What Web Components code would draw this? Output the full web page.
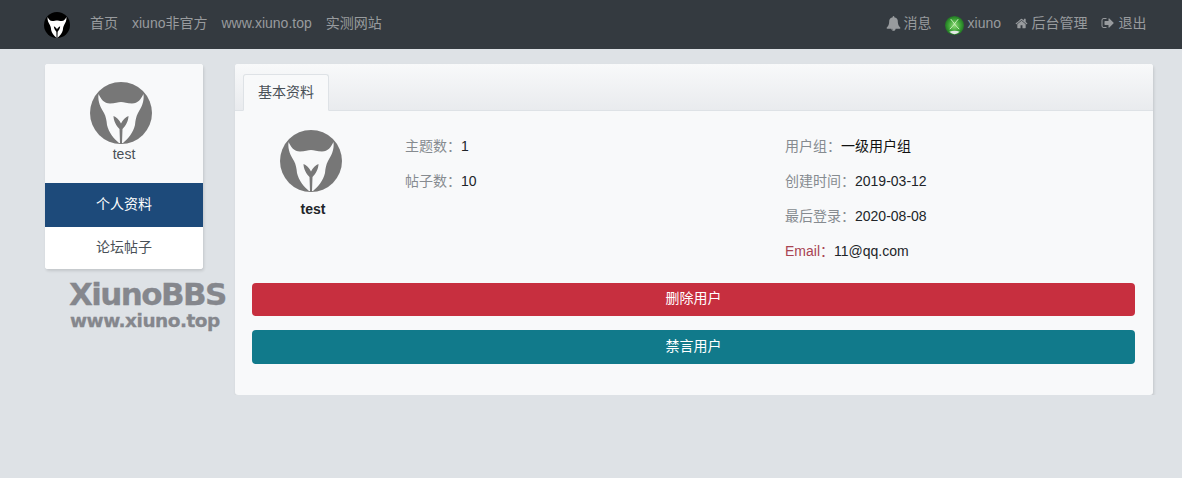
<!DOCTYPE html>
<html lang="zh">
<head>
<meta charset="utf-8">
<title>test</title>
<style>
  html, body { margin: 0; padding: 0; }
  body {
    background: #dee2e6;
    color: #212529;
    font: 14px/21px "Liberation Sans", "Noto Sans CJK SC", sans-serif;
  }
</style>
</head>
<body>

<site-navbar>
  <nav-link slot="left">首页</nav-link>
  <nav-link slot="left">xiuno非官方</nav-link>
  <nav-link slot="left">www.xiuno.top</nav-link>
  <nav-link slot="left">实测网站</nav-link>

  <nav-link slot="right" icon="bell">消息</nav-link>
  <nav-link slot="right" icon="user">xiuno</nav-link>
  <nav-link slot="right" icon="home">后台管理</nav-link>
  <nav-link slot="right" icon="signout">退出</nav-link>
</site-navbar>

<page-layout>
  <side-menu slot="side" name="test">
    <menu-item active>个人资料</menu-item>
    <menu-item>论坛帖子</menu-item>
  </side-menu>

  <profile-panel slot="main" tab="基本资料" name="test">
    <info-row slot="col1" label="主题数">1</info-row>
    <info-row slot="col1" label="帖子数">10</info-row>

    <info-row slot="col2" label="用户组" strong>一级用户组</info-row>
    <info-row slot="col2" label="创建时间">2019-03-12</info-row>
    <info-row slot="col2" label="最后登录">2020-08-08</info-row>
    <info-row slot="col2" label="Email" danger>11@qq.com</info-row>

    <action-button slot="actions" color="#c72f3f" height="33">删除用户</action-button>
    <action-button slot="actions" color="#117a8b" height="34">禁言用户</action-button>
  </profile-panel>
</page-layout>

<script>
// bull head mark, 62x62 box
function bullMark(bg, fg) {
  return `<svg viewBox="0 0 62 62" width="100%" height="100%" style="display:block">
    <circle cx="31" cy="31" r="31" fill="${bg}"/>
    <path fill="${fg}" d="M8.500 12C11 17 14 21.500 20 21.500C25 21.500 28 20 31 20C34 20 37 21.500 42 21.500C48 21.500 51 17 53.500 12C54.500 20 51 26 48 31C46 35 45.500 38 45 43C43.500 50 38 57 33 61L29 61C24 57 18.500 50 17 43C16.500 38 16 35 14 31C11 26 7.500 20 8.500 12Z"/>
    <path fill="${bg}" d="M23.500 34C26 35 29.500 38 31 41.500C32.500 38 36 35 38.500 34C38.500 39 35.500 44 32.500 47L32 61L30 61L29.500 47C26.500 44 23.500 39 23.500 34Z"/>
  </svg>`;
}

const ICONS = {
  bell: `<svg viewBox="0 0 1792 1792" width="15" height="15"><path fill="currentColor" d="M912 1696q0-16-16-16-59 0-101.500-42.500t-42.500-101.500q0-16-16-16t-16 16q0 73 51.500 124.500t124.500 51.500q16 0 16-16zm816-288q0 52-38 90t-90 38h-448q0 106-75 181t-181 75-181-75-75-181h-448q-52 0-90-38t-38-90q50-42 91-88t85-119.500 74.500-158.500 50-206 19.500-260q0-152 117-282.500t307-158.500q-8-19-8-39 0-40 28-68t68-28 68 28 28 68q0 20-8 39 190 28 307 158.500t117 282.500q0 139 19.500 260t50 206 74.500 158.500 85 119.500 91 88z"/></svg>`,
  home: `<svg viewBox="0 0 1792 1792" width="13" height="13"><path fill="currentColor" d="M1472 992v480q0 26-19 45t-45 19h-384v-384h-256v384h-384q-26 0-45-19t-19-45v-480q0-1 .5-3t.5-3l575-474 575 474q1 2 1 6zm223-69l-62 74q-8 9-21 11h-3q-13 0-21-7l-692-577-692 577q-12 8-24 7-13-2-21-11l-62-74q-8-10-7-23.500t11-21.500l719-599q32-26 76-26t76 26l244 204v-195q0-14 9-23t23-9h192q14 0 23 9t9 23v408l219 182q10 8 11 21.500t-7 23.500z"/></svg>`,
  signout: `<svg viewBox="0 0 1792 1792" width="14" height="14"><path fill="currentColor" d="M704 1440q0 4 1 20t.5 26.500-3 23.500-10 19.500-20.500 6.500h-320q-119 0-203.500-84.500t-84.500-203.500v-704q0-119 84.500-203.500t203.500-84.500h320q13 0 22.500 9.500t9.500 22.500q0 4 1 20t.5 26.500-3 23.500-10 19.500-20.500 6.500h-320q-66 0-113 47t-47 113v704q0 66 47 113t113 47h312l11.500 1 11.500 3 8 5.500 7 9 2 13.500zm928-544q0 26-19 45l-544 544q-19 19-45 19t-45-19-19-45v-288h-448q-26 0-45-19t-19-45v-384q0-26 19-45t45-19h448v-288q0-26 19-45t45-19 45 19l544 544q19 19 19 45z"/></svg>`,
  user: `<svg viewBox="0 0 18 18" width="19" height="19" style="margin-top:4px">
    <defs><radialGradient id="g" cx="50%" cy="50%" r="55%">
      <stop offset="0" stop-color="#8fdc78"/><stop offset=".6" stop-color="#3aa034"/><stop offset="1" stop-color="#1b6a20"/>
    </radialGradient></defs>
    <circle cx="9" cy="9" r="9" fill="url(#g)"/>
    <path d="M5.500 3C6.500 4.500 8 6 9 7.500C10 6 11.500 4.500 12.500 3M4.500 12.500C6 11 8 9 9 7.500C10 9 12 11 13.500 12.500" fill="none" stroke="#d2f0c4" stroke-width=".9"/>
    <path d="M4 15Q9 13 14 15Q9 19.500 4 15Z" fill="#e4e8e4"/>
  </svg>`
};

class SiteNavbar extends HTMLElement {
  constructor() {
    super();
    this.attachShadow({ mode: "open" });
    this.shadowRoot.innerHTML = `
      <style>
        :host { display: block; background: #343a40; height: 49px; }
        .bar { display: flex; align-items: center; height: 49px; padding: 0 29px 0 44px; box-sizing: border-box; }
        .logo { width: 26px; height: 26px; margin-right: 13px; flex: none; }
        .group { display: flex; align-items: center; margin-bottom: 3px; }
        .right { margin-left: auto; }
      </style>
      <div class="bar">
        <div class="logo">${bullMark("#000", "#fff")}</div>
        <div class="group"><slot name="left"></slot></div>
        <div class="group right"><slot name="right"></slot></div>
      </div>`;
  }
}

class NavLink extends HTMLElement {
  constructor() {
    super();
    this.attachShadow({ mode: "open" });
    const icon = ICONS[this.getAttribute("icon")] || "";
    this.shadowRoot.innerHTML = `
      <style>
        :host { display: block; color: #989b9e; padding: 0 7px; white-space: nowrap; }
        :host([slot="right"]) { padding: 0 6.500px; }
        :host([icon="user"]) { margin: 0 .5px; }
        :host([icon="bell"]) .link { gap: 3px; }
        :host([icon="user"]) .link { gap: 3.500px; }
        .link { display: flex; align-items: center; gap: 4px; height: 21px; }
        svg { display: block; flex: none; }
      </style>
      <div class="link">${icon}<span><slot></slot></span></div>`;
  }
}

class PageLayout extends HTMLElement {
  constructor() {
    super();
    this.attachShadow({ mode: "open" });
    this.shadowRoot.innerHTML = `
      <style>
        :host { display: flex; align-items: flex-start; gap: 32px; padding: 15px 29px 0 45px; }
        .side { flex: 0 0 158px; width: 158px; }
        .main { flex: 1; min-width: 0; }
      </style>
      <div class="side"><slot name="side"></slot></div>
      <div class="main"><slot name="main"></slot></div>`;
  }
}

class SideMenu extends HTMLElement {
  constructor() {
    super();
    this.attachShadow({ mode: "open" });
    this.shadowRoot.innerHTML = `
      <style>
        :host { display: block; }
        .card { background: #fff; border-radius: 3px; overflow: hidden; box-shadow: 1px 2px 3px rgba(0,0,0,.12); }
        .head { background: #f8f9fa; height: 119px; box-sizing: border-box; padding-top: 18px; text-align: center; color: #495057; }
        .avatar { width: 62px; height: 62px; margin: 0 0 0 45px; }
        .name { line-height: 21px; }
        .brand { margin: 10px 0 0 24px; color: #85878d; font-family: "DejaVu Sans", sans-serif; font-weight: bold; white-space: nowrap; -webkit-text-stroke: .3px #85878d; }
        .brand .big { font-size: 31px; line-height: 30px; letter-spacing: -1.600px; }
        .brand .small { font-size: 18.500px; line-height: 24px; letter-spacing: -.5px; margin-left: 1px; }
      </style>
      <div class="card">
        <div class="head">
          <div class="avatar">${bullMark("#777", "#f8f9fa")}</div>
          <div class="name">${this.getAttribute("name")}</div>
        </div>
        <slot></slot>
      </div>
      <div class="brand">
        <div class="big">XiunoBBS</div>
        <div class="small">www.xiuno.top</div>
      </div>`;
  }
}

class MenuItem extends HTMLElement {
  constructor() {
    super();
    this.attachShadow({ mode: "open" });
    this.shadowRoot.innerHTML = `
      <style>
        :host { display: block; text-align: center; background: #fff; color: #495057; line-height: 40px; height: 42px; }
        :host([active]) { background: #1d4a7a; color: #fff; line-height: 42px; height: 44px; }
      </style>
      <slot></slot>`;
  }
}

class ProfilePanel extends HTMLElement {
  constructor() {
    super();
    this.attachShadow({ mode: "open" });
    this.shadowRoot.innerHTML = `
      <style>
        :host { display: block; background: #f8f9fa; border-radius: 3px; box-shadow: 1px 2px 3px rgba(0,0,0,.12); }
        .header { height: 47px; box-sizing: border-box; padding: 10px 0 0 8px; display: flex; align-items: flex-end;
          background: linear-gradient(#f8f9fa, #e9ebee); border-bottom: 1px solid #dee2e6; border-radius: 3px 3px 0 0; }
        .tab { height: 37px; box-sizing: border-box; margin-bottom: -1px; padding: 0 14px; line-height: 35px;
          background: #f8f9fa; border: 1px solid #dee2e6; border-bottom-color: #f8f9fa; border-radius: 3px 3px 0 0; color: #495057; }
        .body { padding: 19px 18px 31px 17px; }
        .info { display: flex; }
        .who { flex: none; width: 122px; margin-right: 31px; text-align: center; }
        .avatar { width: 62px; height: 62px; margin: 0 0 7px 28px; }
        .name { font-weight: bold; color: #212529; }
        .col { flex: none; width: 380px; padding-top: 6px; }
        .actions { display: flex; flex-direction: column; gap: 14px; margin-top: 7px; }
      </style>
      <div class="header"><div class="tab">${this.getAttribute("tab")}</div></div>
      <div class="body">
        <div class="info">
          <div class="who">
            <div class="avatar">${bullMark("#777", "#f8f9fa")}</div>
            <div class="name">${this.getAttribute("name")}</div>
          </div>
          <div class="col"><slot name="col1"></slot></div>
          <div class="col"><slot name="col2"></slot></div>
        </div>
        <div class="actions"><slot name="actions"></slot></div>
      </div>`;
  }
}

class InfoRow extends HTMLElement {
  constructor() {
    super();
    this.attachShadow({ mode: "open" });
    this.shadowRoot.innerHTML = `
      <style>
        :host { display: block; height: 21px; margin-bottom: 14px; line-height: 21px; color: #212529; }
        .label { color: #868b90; }
        :host([danger]) .label { color: #a94452; }
        :host([strong]) { color: #111; }
      </style>
      <span class="label">${this.getAttribute("label")}：</span><slot></slot>`;
  }
}

class ActionButton extends HTMLElement {
  constructor() {
    super();
    this.attachShadow({ mode: "open" });
    const h = this.getAttribute("height");
    this.shadowRoot.innerHTML = `
      <style>
        :host { display: block; }
        button { display: block; width: 100%; height: ${h}px; padding: 0 0 2px; border: 0; border-radius: 4px;
          background: ${this.getAttribute("color")}; color: #fff; font: inherit; text-align: center; }
      </style>
      <button type="button"><slot></slot></button>`;
  }
}

customElements.define("site-navbar", SiteNavbar);
customElements.define("nav-link", NavLink);
customElements.define("page-layout", PageLayout);
customElements.define("side-menu", SideMenu);
customElements.define("menu-item", MenuItem);
customElements.define("profile-panel", ProfilePanel);
customElements.define("info-row", InfoRow);
customElements.define("action-button", ActionButton);
</script>
</body>
</html>
